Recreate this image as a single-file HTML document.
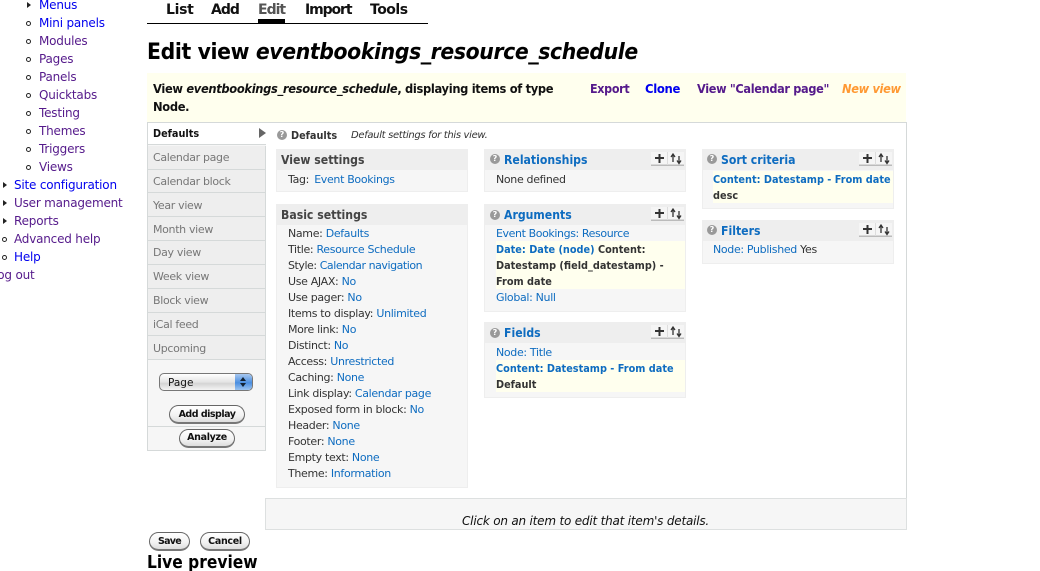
<!DOCTYPE html>
<html><head><meta charset="utf-8"><style>
html,body{margin:0;padding:0;background:#fff;width:1040px;height:571px;overflow:hidden}
body{position:relative;font-family:"DejaVu Sans","Liberation Sans",sans-serif;font-size:11px;color:#333}
.t{position:absolute;white-space:nowrap;line-height:16px;height:16px;letter-spacing:-.33px}
.b{position:absolute;box-sizing:border-box}
.m{font-size:12px;letter-spacing:-.2px}
.bl{color:#0000ee}.pu{color:#551a8b}.a{color:#0e6cc0}
.bd{font-weight:bold}
.bs{font-weight:bold;letter-spacing:0;transform:scaleX(.885);transform-origin:0 0}
.yb{font-weight:bold;font-size:12px;letter-spacing:-.35px;transform:scaleX(.957);transform-origin:0 0}
.tab{font-weight:bold;font-size:14px;color:#111;letter-spacing:-.65px}
.dt{color:#777}
.dot{position:absolute;width:3px;height:3px;border:1px solid #222;border-radius:50%;background:#fff}
.ar{position:absolute;width:0;height:0;border-left:4px solid #222;border-top:3.5px solid transparent;border-bottom:3.5px solid transparent}
.p{position:absolute;box-sizing:border-box;background:#f6f6f6;border:1px solid #eee}
.h{position:absolute;left:0;top:0;right:0;height:20px;background:#eee}
.y{position:absolute;background:#ffffee}
.ic{position:absolute;width:10px;height:10px;border-radius:50%;background:#999;color:#fff;font:bold 8px/10px "DejaVu Sans",sans-serif;text-align:center}
.hd{font-weight:bold;font-size:12px;letter-spacing:0;transform:scaleX(.91);transform-origin:0 0}
.btn{position:absolute;box-sizing:border-box;background:linear-gradient(#fff,#f2f2f2 60%,#ddd);border:1px solid #666;border-bottom:2px solid #777;border-radius:10px;text-align:center;font-weight:bold;font-size:9.5px;line-height:17px;color:#111;letter-spacing:-.4px}
svg.c{position:absolute;width:33px;height:14px}
</style></head><body>

<!-- left menu -->
<div class="ar" style="left:27px;top:2px"></div><div class="t m bl" style="left:39px;top:-3px">Menus</div>
<div class="dot" style="left:26px;top:21px"></div><div class="t m bl" style="left:39px;top:15px">Mini panels</div>
<div class="dot" style="left:26px;top:39px"></div><div class="t m pu" style="left:39px;top:33px">Modules</div>
<div class="dot" style="left:26px;top:57px"></div><div class="t m pu" style="left:39px;top:51px">Pages</div>
<div class="dot" style="left:26px;top:75px"></div><div class="t m pu" style="left:39px;top:69px">Panels</div>
<div class="dot" style="left:26px;top:93px"></div><div class="t m pu" style="left:39px;top:87px">Quicktabs</div>
<div class="dot" style="left:26px;top:111px"></div><div class="t m pu" style="left:39px;top:105px">Testing</div>
<div class="dot" style="left:26px;top:129px"></div><div class="t m pu" style="left:39px;top:123px">Themes</div>
<div class="dot" style="left:26px;top:147px"></div><div class="t m pu" style="left:39px;top:141px">Triggers</div>
<div class="dot" style="left:26px;top:165px"></div><div class="t m pu" style="left:39px;top:159px">Views</div>
<div class="ar" style="left:3px;top:182px"></div><div class="t m bl" style="left:14px;top:177px">Site configuration</div>
<div class="ar" style="left:3px;top:200px"></div><div class="t m pu" style="left:14px;top:195px">User management</div>
<div class="ar" style="left:3px;top:218px"></div><div class="t m pu" style="left:14px;top:213px">Reports</div>
<div class="dot" style="left:2px;top:237px"></div><div class="t m pu" style="left:14px;top:231px">Advanced help</div>
<div class="dot" style="left:2px;top:255px"></div><div class="t m bl" style="left:14px;top:249px">Help</div>
<div class="t m pu" style="left:-9px;top:267px">Log out</div>

<!-- tabs -->
<div class="t tab" style="left:166px;top:2px;letter-spacing:-.3px">List</div>
<div class="t tab" style="left:211px;top:2px;letter-spacing:-1px">Add</div>
<div class="t tab" style="left:258px;top:2px;color:#555;letter-spacing:-1px">Edit</div>
<div class="t tab" style="left:305px;top:2px;letter-spacing:-1.1px">Import</div>
<div class="t tab" style="left:370px;top:2px;letter-spacing:-.5px">Tools</div>
<div class="b" style="left:147px;top:23px;width:281px;height:1px;background:#000"></div>
<div class="b" style="left:258px;top:19px;width:27px;height:4px;background:#000"></div>

<div class="t" style="left:147px;top:38px;height:30px;line-height:30px;font-size:22px;font-weight:bold;color:#000;letter-spacing:-.4px;transform:scaleX(.928);transform-origin:0 0">Edit view <i>eventbookings_resource_schedule</i></div>

<!-- yellow bar -->
<div class="b" style="left:147px;top:73px;width:759px;height:49px;background:#ffffee"></div>
<div class="t yb" style="left:153px;top:81px;color:#111">View <i>eventbookings_resource_schedule</i>, displaying items of type</div>
<div class="t yb" style="left:153px;top:99px;color:#111">Node.</div>
<div class="t yb pu" style="left:590px;top:81px;transform:scaleX(.93)">Export</div>
<div class="t yb bl" style="left:645px;top:81px;transform:scaleX(.97)">Clone</div>
<div class="t yb pu" style="left:697px;top:81px;transform:scaleX(.943)">View "Calendar page"</div>
<div class="t yb" style="left:842px;top:81px;color:#ff9933;font-style:italic;transform:scaleX(.95)">New view</div>

<!-- main box -->
<div class="b" style="left:266px;top:122px;width:641px;height:408px;border:1px solid #d5d9d9;border-left:none"></div>
<div class="b" style="left:265px;top:498px;width:642px;height:32px;background:#f6f6f6;border:1px solid #dde0e0"></div>
<div class="t" style="left:462px;top:513px;font-style:italic;color:#111;font-size:12px;letter-spacing:-.2px">Click on an item to edit that item's details.</div>

<!-- left column -->
<div class="b" style="left:147px;top:122px;width:119px;height:329px;background:#f6f6f6;border:1px solid #d5d9d9;border-right:none"></div>
<div class="b" style="left:265px;top:360px;width:1px;height:91px;background:#d5d9d9"></div>
<div class="b" style="left:148px;top:123px;width:118px;height:22px;background:#fff;border-bottom:1px solid #d5d9d9"></div>
<div class="t bs" style="left:153px;top:126px;color:#111">Defaults</div>
<div class="b" style="left:259px;top:128px;width:0;height:0;border-left:7px solid #666;border-top:5px solid transparent;border-bottom:5px solid transparent"></div>
<div class="b" style="left:148px;top:146px;width:118px;height:214px;background:#eee;border-right:1px solid #d5d9d9"></div>
<div class="b" style="left:148px;top:169px;width:117px;height:1px;background:#d5d9d9"></div>
<div class="b" style="left:148px;top:192px;width:117px;height:1px;background:#d5d9d9"></div>
<div class="b" style="left:148px;top:216px;width:117px;height:1px;background:#d5d9d9"></div>
<div class="b" style="left:148px;top:240px;width:117px;height:1px;background:#d5d9d9"></div>
<div class="b" style="left:148px;top:264px;width:117px;height:1px;background:#d5d9d9"></div>
<div class="b" style="left:148px;top:288px;width:117px;height:1px;background:#d5d9d9"></div>
<div class="b" style="left:148px;top:312px;width:117px;height:1px;background:#d5d9d9"></div>
<div class="b" style="left:148px;top:335px;width:117px;height:1px;background:#d5d9d9"></div>
<div class="b" style="left:148px;top:359px;width:117px;height:1px;background:#d5d9d9"></div>
<div class="t dt" style="left:153px;top:150px">Calendar page</div>
<div class="t dt" style="left:153px;top:174px">Calendar block</div>
<div class="t dt" style="left:153px;top:198px">Year view</div>
<div class="t dt" style="left:153px;top:222px">Month view</div>
<div class="t dt" style="left:153px;top:245px">Day view</div>
<div class="t dt" style="left:153px;top:269px">Week view</div>
<div class="t dt" style="left:153px;top:293px">Block view</div>
<div class="t dt" style="left:153px;top:317px">iCal feed</div>
<div class="t dt" style="left:153px;top:341px">Upcoming</div>
<div class="b" style="left:148px;top:426px;width:118px;height:1px;background:#d5d9d9"></div>

<!-- select -->
<div class="b" style="left:159px;top:373px;width:94px;height:18px;border:1px solid #777;border-radius:5px;background:linear-gradient(#fff,#e4e4e4 50%,#d4d4d4 60%,#f4f4f4);font-size:10.5px;line-height:18px;color:#111;padding-left:8px;overflow:hidden">Page<div class="b" style="right:0;top:0;width:17px;height:16px;background:linear-gradient(#a8c8f0,#4a8ee0 55%,#9cc4f0)"><div class="b" style="left:5px;top:3px;border-left:3px solid transparent;border-right:3px solid transparent;border-bottom:4px solid #123"></div><div class="b" style="left:5px;top:9px;border-left:3px solid transparent;border-right:3px solid transparent;border-top:4px solid #123"></div></div></div>
<div class="btn" style="left:169px;top:405px;width:76px;height:19px;letter-spacing:-.5px">Add display</div>
<div class="btn" style="left:179px;top:429px;width:56px;height:19px;letter-spacing:-.3px;line-height:16px">Analyze</div>
<div class="btn" style="left:149px;top:532px;width:41px;height:19px;letter-spacing:-.7px">Save</div>
<div class="btn" style="left:200px;top:532px;width:50px;height:19px;letter-spacing:-.3px">Cancel</div>
<div class="t" style="left:147px;top:552px;height:22px;line-height:22px;font-size:18px;font-weight:bold;color:#000;letter-spacing:0;transform:scaleX(.86);transform-origin:0 0">Live preview</div>

<!-- defaults head -->
<div class="ic" style="left:277px;top:130px">?</div>
<div class="t bs" style="left:291px;top:128px">Defaults</div>
<div class="t" style="left:351px;top:128px;font-size:10px;font-style:italic;letter-spacing:-.33px">Default settings for this view.</div>

<!-- View settings -->
<div class="p" style="left:276px;top:149px;width:192px;height:43px"><div class="h"></div></div>
<div class="t hd" style="left:281px;top:152px;color:#444">View settings</div>
<div class="t" style="left:288px;top:172px">Tag: <span class="a" style="margin-left:2px">Event Bookings</span></div>

<!-- Basic settings -->
<div class="p" style="left:276px;top:204px;width:192px;height:284px"><div class="h"></div></div>
<div class="t hd" style="left:281px;top:207px;color:#444">Basic settings</div>
<div class="t" style="left:288px;top:226px">Name: <span class="a">Defaults</span></div>
<div class="t" style="left:288px;top:242px">Title: <span class="a">Resource Schedule</span></div>
<div class="t" style="left:288px;top:258px;letter-spacing:-.45px">Style: <span class="a">Calendar navigation</span></div>
<div class="t" style="left:288px;top:274px">Use AJAX: <span class="a">No</span></div>
<div class="t" style="left:288px;top:290px">Use pager: <span class="a">No</span></div>
<div class="t" style="left:288px;top:306px">Items to display: <span class="a">Unlimited</span></div>
<div class="t" style="left:288px;top:322px">More link: <span class="a">No</span></div>
<div class="t" style="left:288px;top:338px">Distinct: <span class="a">No</span></div>
<div class="t" style="left:288px;top:354px">Access: <span class="a">Unrestricted</span></div>
<div class="t" style="left:288px;top:370px">Caching: <span class="a">None</span></div>
<div class="t" style="left:288px;top:386px">Link display: <span class="a">Calendar page</span></div>
<div class="t" style="left:288px;top:402px">Exposed form in block: <span class="a">No</span></div>
<div class="t" style="left:288px;top:418px">Header: <span class="a">None</span></div>
<div class="t" style="left:288px;top:434px">Footer: <span class="a">None</span></div>
<div class="t" style="left:288px;top:450px">Empty text: <span class="a">None</span></div>
<div class="t" style="left:288px;top:466px">Theme: <span class="a">Information</span></div>

<!-- Relationships -->
<div class="p" style="left:484px;top:149px;width:202px;height:43px"><div class="h"></div></div>
<div class="ic" style="left:490px;top:154px">?</div>
<div class="t hd a" style="left:504px;top:152px">Relationships</div>
<svg class="c" style="left:651px;top:152px" viewBox="0 0 33 14"><rect width="33" height="13" fill="#f5f5f5"/><rect y="12.5" width="33" height="1.5" fill="#bbb"/><rect x="16" width="1" height="13" fill="#ddd"/><path d="M4 6h9M8.500 2v9" stroke="#333" stroke-width="2" fill="none"/><path d="M22 10V3M20 5l2-3 2 3M28 4v7M26 8.500l2 3 2-3" stroke="#333" stroke-width="1.300" fill="none"/></svg>
<div class="t" style="left:496px;top:172px">None defined</div>

<!-- Arguments -->
<div class="p" style="left:484px;top:204px;width:202px;height:108px"><div class="h"></div></div>
<div class="ic" style="left:490px;top:210px">?</div>
<div class="t hd a" style="left:504px;top:207px">Arguments</div>
<svg class="c" style="left:651px;top:207px" viewBox="0 0 33 14"><rect width="33" height="13" fill="#f5f5f5"/><rect y="12.5" width="33" height="1.5" fill="#bbb"/><rect x="16" width="1" height="13" fill="#ddd"/><path d="M4 6h9M8.500 2v9" stroke="#333" stroke-width="2" fill="none"/><path d="M22 10V3M20 5l2-3 2 3M28 4v7M26 8.500l2 3 2-3" stroke="#333" stroke-width="1.300" fill="none"/></svg>
<div class="t a" style="left:496px;top:226px;letter-spacing:-.4px">Event Bookings: Resource</div>
<div class="y" style="left:496px;top:241px;width:189px;height:48px"></div>
<div class="t bs" style="left:496px;top:242px"><span class="a">Date: Date (node)</span> Content:</div>
<div class="t bs" style="left:496px;top:258px">Datestamp (field_datestamp) -</div>
<div class="t bs" style="left:496px;top:274px">From date</div>
<div class="t a" style="left:496px;top:290px">Global: Null</div>

<!-- Fields -->
<div class="p" style="left:484px;top:322px;width:202px;height:76px"><div class="h"></div></div>
<div class="ic" style="left:490px;top:328px">?</div>
<div class="t hd a" style="left:504px;top:325px">Fields</div>
<svg class="c" style="left:651px;top:325px" viewBox="0 0 33 14"><rect width="33" height="13" fill="#f5f5f5"/><rect y="12.5" width="33" height="1.5" fill="#bbb"/><rect x="16" width="1" height="13" fill="#ddd"/><path d="M4 6h9M8.500 2v9" stroke="#333" stroke-width="2" fill="none"/><path d="M22 10V3M20 5l2-3 2 3M28 4v7M26 8.500l2 3 2-3" stroke="#333" stroke-width="1.300" fill="none"/></svg>
<div class="t a" style="left:496px;top:345px">Node: Title</div>
<div class="y" style="left:496px;top:360px;width:189px;height:32px"></div>
<div class="t bs a" style="left:496px;top:361px">Content: Datestamp - From date</div>
<div class="t bs" style="left:496px;top:377px">Default</div>

<!-- Sort -->
<div class="p" style="left:702px;top:149px;width:192px;height:60px"><div class="h"></div></div>
<div class="ic" style="left:707px;top:154px">?</div>
<div class="t hd a" style="left:721px;top:152px">Sort criteria</div>
<svg class="c" style="left:859px;top:152px" viewBox="0 0 33 14"><rect width="33" height="13" fill="#f5f5f5"/><rect y="12.5" width="33" height="1.5" fill="#bbb"/><rect x="16" width="1" height="13" fill="#ddd"/><path d="M4 6h9M8.500 2v9" stroke="#333" stroke-width="2" fill="none"/><path d="M22 10V3M20 5l2-3 2 3M28 4v7M26 8.500l2 3 2-3" stroke="#333" stroke-width="1.300" fill="none"/></svg>
<div class="y" style="left:713px;top:171px;width:180px;height:32px"></div>
<div class="t bs a" style="left:713px;top:172px">Content: Datestamp - From date</div>
<div class="t bs" style="left:713px;top:188px">desc</div>

<!-- Filters -->
<div class="p" style="left:702px;top:220px;width:192px;height:44px"><div class="h"></div></div>
<div class="ic" style="left:707px;top:225px">?</div>
<div class="t hd a" style="left:721px;top:223px">Filters</div>
<svg class="c" style="left:859px;top:223px" viewBox="0 0 33 14"><rect width="33" height="13" fill="#f5f5f5"/><rect y="12.5" width="33" height="1.5" fill="#bbb"/><rect x="16" width="1" height="13" fill="#ddd"/><path d="M4 6h9M8.500 2v9" stroke="#333" stroke-width="2" fill="none"/><path d="M22 10V3M20 5l2-3 2 3M28 4v7M26 8.500l2 3 2-3" stroke="#333" stroke-width="1.300" fill="none"/></svg>
<div class="t" style="left:713px;top:242px"><span class="a">Node: Published</span> Yes</div>

</body></html>
